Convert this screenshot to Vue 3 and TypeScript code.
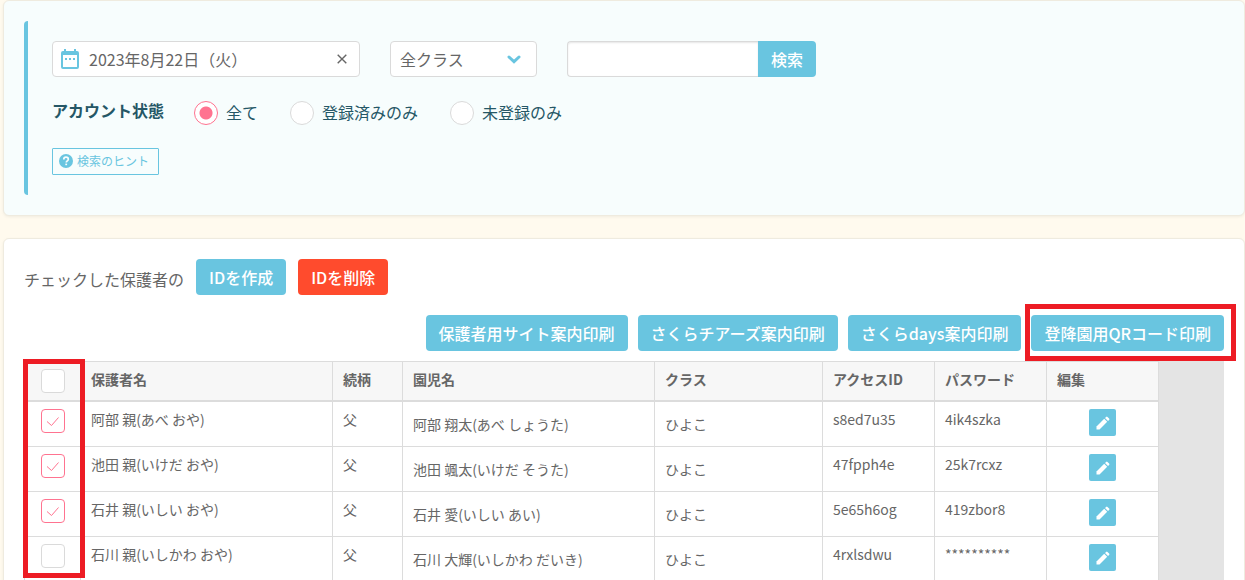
<script setup lang="ts">
import { computed, ref } from 'vue'

interface Guardian {
  id: number
  name: string
  relation: string
  child: string
  className: string
  accessId: string
  password: string
  checked: boolean
}

const date = ref('2023年8月22日（火）')
const keyword = ref('')
const classFilter = ref('all')
const status = ref('all')

const statuses = [
  { value: 'all', label: '全て' },
  { value: 'registered', label: '登録済みのみ' },
  { value: 'unregistered', label: '未登録のみ' },
]

const columns = ['保護者名', '続柄', '園児名', 'クラス', 'アクセスID', 'パスワード', '編集']

const guardians = ref<Guardian[]>([
  { id: 1, name: '阿部 親(あべ おや)', relation: '父', child: '阿部 翔太(あべ しょうた)', className: 'ひよこ', accessId: 's8ed7u35', password: '4ik4szka', checked: true },
  { id: 2, name: '池田 親(いけだ おや)', relation: '父', child: '池田 颯太(いけだ そうた)', className: 'ひよこ', accessId: '47fpph4e', password: '25k7rcxz', checked: true },
  { id: 3, name: '石井 親(いしい おや)', relation: '父', child: '石井 愛(いしい あい)', className: 'ひよこ', accessId: '5e65h6og', password: '419zbor8', checked: true },
  { id: 4, name: '石川 親(いしかわ おや)', relation: '父', child: '石川 大輝(いしかわ だいき)', className: 'ひよこ', accessId: '4rxlsdwu', password: '**********', checked: false },
])

const allChecked = computed({
  get: () => guardians.value.every((g) => g.checked),
  set: (value: boolean) => guardians.value.forEach((g) => (g.checked = value)),
})
</script>

<template>
  <main class="page">
    <section class="card search-card">
      <form class="filters" @submit.prevent>
        <div class="filter-row">
          <div class="date-field">
            <svg class="calendar" viewBox="0 0 18 20" aria-hidden="true">
              <path d="M2 2h1V0h2v2h8V0h2v2h1a2 2 0 0 1 2 2v14a2 2 0 0 1-2 2H2a2 2 0 0 1-2-2V4a2 2 0 0 1 2-2zm0 4v12h14V6z" fill="#69c5e0" fill-rule="evenodd" />
              <path d="M4 9h2v2H4zM8 9h2v2H8zM12 9h2v2h-2z" fill="#69c5e0" />
            </svg>
            <input v-model="date" type="text" aria-label="日付" />
            <button type="button" class="clear" aria-label="日付をクリア" @click="date = ''">
              <svg viewBox="0 0 10 10" aria-hidden="true"><path d="M.7.7l8.6 8.6M9.3.7L.7 9.3" fill="none" stroke="#666" stroke-width="1.4" /></svg>
            </button>
          </div>
          <div class="select-field">
            <select v-model="classFilter" aria-label="クラス">
              <option value="all">全クラス</option>
              <option value="hiyoko">ひよこ</option>
            </select>
            <svg viewBox="0 0 14 9" aria-hidden="true"><path d="M2 2l5 4.6L12 2" fill="none" stroke="#69c5e0" stroke-width="3" stroke-linecap="round" /></svg>
          </div>
          <div class="search-field">
            <input v-model="keyword" type="text" aria-label="キーワード" />
            <button type="submit">検索</button>
          </div>
        </div>
        <fieldset class="status-row">
          <legend class="status-title">アカウント状態</legend>
          <label v-for="item in statuses" :key="item.value" class="radio">
            <input v-model="status" type="radio" name="status" :value="item.value" />
            <span>{{ item.label }}</span>
          </label>
        </fieldset>
        <button type="button" class="hint">
          <svg viewBox="0 0 14 14" aria-hidden="true">
            <circle cx="7" cy="7" r="7" fill="#69c5e0" />
            <path d="M4.8 5.4C4.8 4 5.7 3.2 7 3.2s2.3.8 2.3 2c0 1.6-2 1.6-2 3.2" fill="none" stroke="#f7fdfd" stroke-width="1.7" />
            <path d="M6.3 9.6h1.8v1.6H6.3z" fill="#f7fdfd" />
          </svg>
          <span>検索のヒント</span>
        </button>
      </form>
    </section>

    <section class="card">
      <div class="actions">
        <span class="actions-label">チェックした保護者の</span>
        <button type="button" class="btn">IDを作成</button>
        <button type="button" class="btn danger">IDを削除</button>
      </div>
      <div class="prints">
        <button type="button" class="btn">保護者用サイト案内印刷</button>
        <button type="button" class="btn">さくらチアーズ案内印刷</button>
        <button type="button" class="btn">さくらdays案内印刷</button>
        <div class="marked">
          <button type="button" class="btn">登降園用QRコード印刷</button>
          <span class="marker button-marker"></span>
        </div>
      </div>
      <div class="table-area">
        <table>
          <colgroup>
            <col class="w-check" />
            <col class="w-name" />
            <col class="w-relation" />
            <col class="w-name" />
            <col class="w-class" />
            <col class="w-code" />
            <col class="w-code" />
            <col class="w-code" />
          </colgroup>
          <thead>
            <tr>
              <th class="check-cell">
                <label class="check">
                  <input v-model="allChecked" type="checkbox" aria-label="すべて選択" />
                  <svg viewBox="0 0 24 24" aria-hidden="true"><path d="M6 12.5l4.5 4 7-8" /></svg>
                </label>
              </th>
              <th v-for="column in columns" :key="column" scope="col">{{ column }}</th>
            </tr>
          </thead>
          <tbody>
            <tr v-for="g in guardians" :key="g.id">
              <td class="check-cell">
                <label class="check">
                  <input v-model="g.checked" type="checkbox" :aria-label="g.name" />
                  <svg viewBox="0 0 24 24" aria-hidden="true"><path d="M6 12.5l4.5 4 7-8" /></svg>
                </label>
              </td>
              <td>{{ g.name }}</td>
              <td>{{ g.relation }}</td>
              <td class="lower">{{ g.child }}</td>
              <td class="lower">{{ g.className }}</td>
              <td>{{ g.accessId }}</td>
              <td>{{ g.password }}</td>
              <td class="edit-cell">
                <button type="button" class="edit" :aria-label="g.name + 'を編集'">
                  <svg viewBox="0 0 14 14" aria-hidden="true">
                    <path d="M.5 10.5L8.2 2.8l3 3-7.7 7.7h-3z" fill="#fff" />
                    <path d="M9 2l1.1-1.1a1 1 0 0 1 1.4 0l1.6 1.6a1 1 0 0 1 0 1.4L12 5z" fill="#fff" />
                  </svg>
                </button>
              </td>
            </tr>
          </tbody>
        </table>
        <span class="marker column-marker"></span>
      </div>
    </section>
  </main>
</template>

<style>
html {
  scrollbar-width: none;
}
body {
  background: #fffaee;
}
</style>

<style scoped>
.page,
.page * {
  box-sizing: border-box;
}
.page {
  display: flex;
  flex-direction: column;
  gap: 22px;
  padding-left: 3px;
  min-height: 100vh;
  color: #666;
  font-family: "Noto Sans CJK JP", sans-serif;
  font-size: 16px;
  line-height: 24px;
}
button,
input,
select {
  margin: 0;
  padding: 0;
  border: 0;
  font: inherit;
  color: inherit;
}
button {
  cursor: pointer;
}
svg {
  display: block;
}
.card {
  padding: 20px;
  border: 1px solid #efebdf;
  border-radius: 6px;
  background: #fff;
  box-shadow: 0 1px 3px rgba(0, 0, 0, 0.06);
}
.search-card {
  background: #f7fdfd;
}
.filters {
  display: flex;
  flex-direction: column;
  align-items: flex-start;
  padding: 20px 24px;
  border-left: 4px solid #69c5e0;
  border-radius: 4px 0 0 4px;
}
.filter-row {
  display: flex;
  flex-wrap: wrap;
  gap: 30px;
}
.date-field,
.select-field {
  display: flex;
  align-items: center;
  height: 36px;
  border: 1px solid #dadada;
  border-radius: 4px;
  background: #fff;
}
.date-field {
  width: 308px;
  padding: 0 12px 0 8px;
}
.calendar {
  flex: none;
  width: 18px;
  height: 20px;
}
.date-field input {
  flex: 1;
  min-width: 0;
  margin-left: 10px;
  background: none;
}
.clear {
  background: none;
}
.clear svg {
  width: 10px;
  height: 10px;
}
.select-field {
  position: relative;
  width: 147px;
}
.select-field select {
  width: 100%;
  height: 34px;
  padding: 0 36px 0 9px;
  appearance: none;
  background: none;
}
.select-field svg {
  position: absolute;
  right: 15px;
  width: 14px;
  height: 9px;
  pointer-events: none;
}
.search-field {
  display: flex;
  height: 36px;
}
.search-field input {
  width: 191px;
  padding: 0 10px;
  border: 1px solid #dadada;
  border-right: 0;
  border-radius: 4px 0 0 4px;
  background: #fff;
  box-shadow: inset 0 1px 2px rgba(0, 0, 0, 0.1);
}
.search-field button {
  width: 58px;
  border-radius: 0 4px 4px 0;
  background: #69c5e0;
  color: #fff;
  font-weight: 500;
}
.status-row {
  display: flow-root;
  margin: 24px 0 23px;
  padding: 0;
  border: 0;
  color: #255766;
}
.status-title {
  float: left;
  margin-right: 30px;
  padding: 0;
  line-height: 18px;
  font-weight: 700;
}
.radio {
  display: inline-flex;
  gap: 8px;
  margin-right: 32px;
  line-height: 22px;
  vertical-align: top;
}
.radio input {
  width: 24px;
  height: 24px;
  border: 1px solid #dadada;
  border-radius: 50%;
  appearance: none;
  background: #fff;
}
.radio input:checked {
  border-color: #ff7390;
  background: radial-gradient(circle, #ff7390 6px, #fff 7px);
}
.hint {
  display: flex;
  align-items: center;
  gap: 4px;
  height: 27px;
  padding: 0 9px 2px 6px;
  border: 1px solid #69c5e0;
  border-radius: 1px;
  background: none;
  color: #69c5e0;
  font-size: 12px;
}
.hint svg {
  width: 14px;
  height: 14px;
}
.actions {
  display: flex;
  flex-wrap: wrap;
  align-items: center;
  gap: 12px;
}
.actions-label {
  padding-top: 4px;
}
.btn {
  height: 36px;
  padding: 0 13px;
  border-radius: 4px;
  background: #69c5e0;
  color: #fff;
  font-weight: 500;
  white-space: nowrap;
}
.danger {
  background: #ff4b2d;
}
.prints {
  display: flex;
  justify-content: flex-end;
  gap: 10px;
  margin: 20px 0 10px;
}
.marked {
  position: relative;
}
.marker {
  position: absolute;
  z-index: 1;
  border: 5px solid #ed1c24;
  pointer-events: none;
}
.button-marker {
  inset: -11px -12px -10px -6px;
}
.column-marker {
  inset: -2px auto 4px -1px;
  width: 62px;
}
.table-area {
  position: relative;
  background: #e4e4e4;
}
table {
  width: 1135px;
  table-layout: fixed;
  border: solid #dcdcdc;
  border-width: 1px 0 0 1px;
  border-spacing: 0;
  background: #fff;
  font-size: 14px;
  line-height: 20px;
}
.w-check {
  width: 56px;
}
.w-name {
  width: 252px;
}
.w-relation {
  width: 70px;
}
.w-class {
  width: 168px;
}
.w-code {
  width: 112px;
}
th,
td {
  padding: 7px 10px 0;
  border: solid #dcdcdc;
  border-width: 0 1px 1px 0;
  text-align: left;
  vertical-align: top;
  white-space: nowrap;
}
th {
  height: 40px;
  border-bottom-width: 2px;
  background: #f7f7f7;
  font-weight: 700;
}
td {
  height: 45px;
}
.lower {
  padding-top: 12px;
}
.check-cell {
  padding: 7px 0 0 16px;
}
.check {
  position: relative;
  display: block;
  width: 24px;
  height: 24px;
}
.check input {
  display: block;
  width: 24px;
  height: 24px;
  border: 1px solid #dadada;
  border-radius: 4px;
  appearance: none;
  background: #fff;
}
.check svg {
  position: absolute;
  inset: 0;
  display: none;
  fill: none;
  stroke: #ff7390;
  stroke-width: 1;
}
.check input:checked {
  border-color: #ff7390;
}
.check input:checked + svg {
  display: block;
}
.edit {
  display: grid;
  place-items: center;
  width: 27px;
  height: 27px;
  margin: 0 auto;
  border-radius: 2px;
  background: #69c5e0;
}
.edit svg {
  width: 14px;
  height: 14px;
}
</style>
